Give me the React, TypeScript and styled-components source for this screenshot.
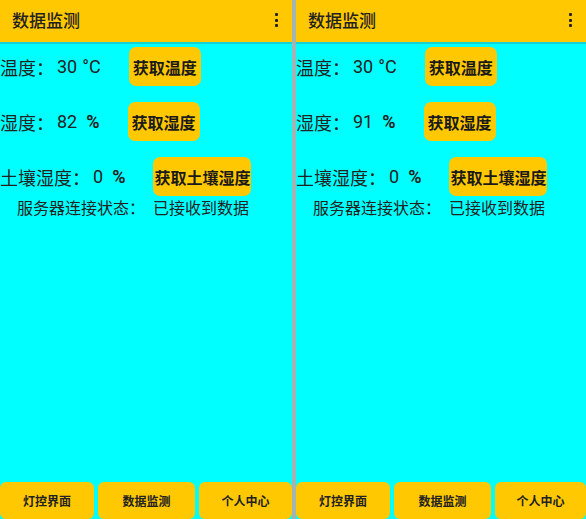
import React from "react";
import styled, { createGlobalStyle } from "styled-components";

const Global = createGlobalStyle`
  html, body { margin: 0; padding: 0; }
  body {
    font-family: "Roboto", "Noto Sans CJK SC", sans-serif;
    background: #00ffff;
    overflow: hidden;
  }
`;

const Screen = styled.div`
  display: flex;
  width: 586px;
  height: 519px;
`;

const Panel = styled.div<{ $w: number }>`
  width: ${(p) => p.$w}px;
  flex: none;
  height: 519px;
  display: flex;
  flex-direction: column;
  background: #00ffff;
`;

const Divider = styled.div`
  width: 4px;
  flex: none;
  background: #a4b4b4;
`;

const Header = styled.div`
  height: 42px;
  flex: none;
  background: #ffc800;
  display: flex;
  align-items: center;
  justify-content: space-between;
  padding: 0 12px;
  box-shadow: 0 2px 0 #14d2d2;
  position: relative;
  z-index: 1;
`;

const Title = styled.div`
  font-family: "Noto Sans CJK SC", sans-serif;
  font-size: 17px;
  font-weight: 500;
  color: #222;
  margin-top: -3px;
`;

const Dots = styled.div`
  display: flex;
  flex-direction: column;
  gap: 2.5px;
  margin-right: 2px;
  margin-top: -2px;
  span {
    width: 3px;
    height: 3px;
    background: #222;
    border-radius: 1px;
  }
`;

const Content = styled.div`
  flex: 1;
  display: flex;
  flex-direction: column;
  padding-top: 5px;
  gap: 16px;
`;

const Row = styled.div`
  display: flex;
  align-items: center;
  height: 39px;
  color: #222;
`;

const Label = styled.span`
  font-family: "Noto Sans CJK SC", sans-serif;
  font-size: 18px;
`;

const Num = styled.span`
  font-size: 18px;
  margin-left: 3px;
`;

const Unit = styled.span<{ $bold?: boolean }>`
  font-size: 18px;
  font-weight: ${(p) => (p.$bold ? 700 : 400)};
  margin-left: ${(p) => (p.$bold ? 9 : 5)}px;
`;

const GetButton = styled.button`
  margin-left: 28px;
  min-width: 72px;
  height: 39px;
  padding: 0 1px;
  border: none;
  border-radius: 7px;
  background: #ffc800;
  font-family: "Noto Sans CJK SC", sans-serif;
  font-size: 16px;
  font-weight: 700;
  color: #1a1a1a;
`;

const Status = styled.div`
  margin-top: -14px;
  padding-left: 17px;
  font-family: "Noto Sans CJK SC", sans-serif;
  font-size: 16px;
  line-height: 19px;
  color: #222;
  span { margin-left: 8px; }
`;

const NavBar = styled.div`
  display: grid;
  grid-template-columns: 94px 97px 1fr;
  gap: 4px;
  height: 37px;
  flex: none;
`;

const NavButton = styled.button`
  border: none;
  border-radius: 6px;
  background: #ffc800;
  font-family: "Noto Sans CJK SC", sans-serif;
  font-size: 12px;
  font-weight: 700;
  color: #222;
  padding: 0;
`;

function Monitor({ width, humidity }: { width: number; humidity: string }) {
  return (
    <Panel $w={width}>
      <Header>
        <Title>数据监测</Title>
        <Dots>
          <span />
          <span />
          <span />
        </Dots>
      </Header>
      <Content>
        <Row>
          <Label>温度：</Label>
          <Num>30</Num>
          <Unit>°C</Unit>
          <GetButton>获取温度</GetButton>
        </Row>
        <Row>
          <Label>湿度：</Label>
          <Num>{humidity}</Num>
          <Unit $bold>%</Unit>
          <GetButton>获取湿度</GetButton>
        </Row>
        <Row>
          <Label>土壤湿度：</Label>
          <Num>0</Num>
          <Unit $bold>%</Unit>
          <GetButton>获取土壤湿度</GetButton>
        </Row>
        <Status>
          服务器连接状态：<span>已接收到数据</span>
        </Status>
      </Content>
      <NavBar>
        <NavButton>灯控界面</NavButton>
        <NavButton>数据监测</NavButton>
        <NavButton>个人中心</NavButton>
      </NavBar>
    </Panel>
  );
}

export default function App() {
  return (
    <>
      <Global />
      <Screen>
        <Monitor width={292} humidity="82" />
        <Divider />
        <Monitor width={290} humidity="91" />
      </Screen>
    </>
  );
}
